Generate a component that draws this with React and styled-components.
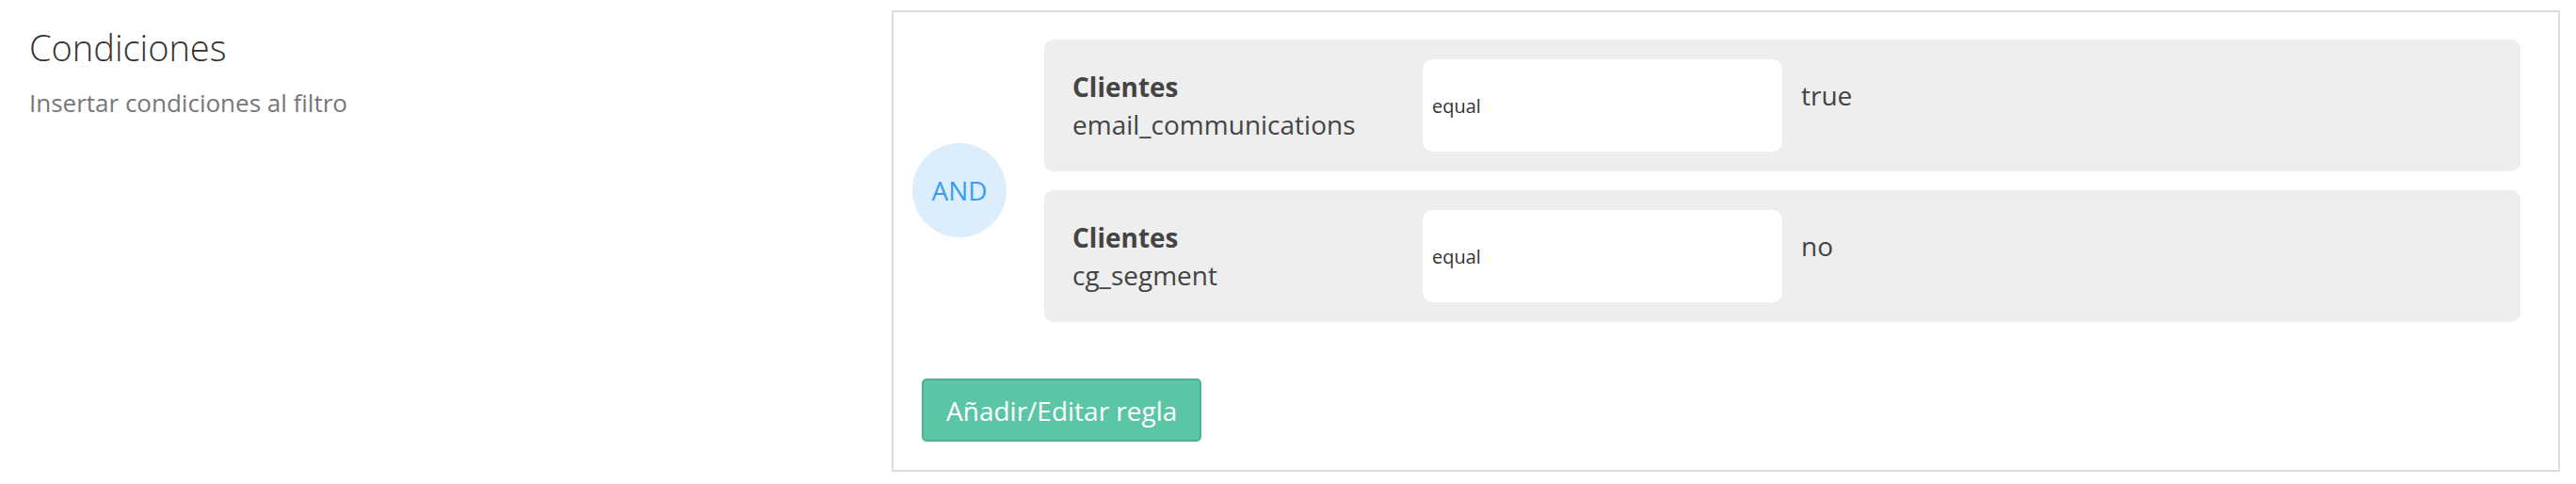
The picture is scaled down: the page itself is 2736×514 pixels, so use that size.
import React from 'react'
import styled, { createGlobalStyle } from 'styled-components'

const GlobalStyle = createGlobalStyle`
  body {
    margin: 0;
    background: #fff;
    font-family: 'Open Sans', 'Liberation Sans', sans-serif;
    color: #444;
  }
`

const rules = [
  { table: 'Clientes', field: 'email_communications', operator: 'equal', value: 'true' },
  { table: 'Clientes', field: 'cg_segment', operator: 'equal', value: 'no' },
]

const App = () => {
  return (
    <>
      <GlobalStyle />
      <Page>
        <Intro>
          <Title>Condiciones</Title>
          <Subtitle>Insertar condiciones al filtro</Subtitle>
        </Intro>
        <Panel>
          <Group>
            <Operator>AND</Operator>
            <RuleList>
              {rules.map((rule, index) => {
                return (
                  <Rule key={index}>
                    <Label>
                      <strong>{rule.table}</strong>
                      <span>{rule.field}</span>
                    </Label>
                    <Select>{rule.operator}</Select>
                    <Value>{rule.value}</Value>
                  </Rule>
                )
              })}
            </RuleList>
          </Group>
          <Button type='button'>Añadir/Editar regla</Button>
        </Panel>
      </Page>
    </>
  )
}

const Page = styled.div`
  display: flex;
  align-items: flex-start;
  padding: 11px 17px 13px 31px;
`

const Intro = styled.div`
  flex: 0 0 916px;
  padding-top: 19px;
`

const Title = styled.h3`
  margin: 0;
  font-size: 38px;
  font-weight: 300;
  line-height: 1.1;
  color: #333;
`

const Subtitle = styled.p`
  margin: 19px 0 0;
  font-size: 26px;
  line-height: 37px;
  color: #777;
`

const Panel = styled.section`
  flex: 1;
  border: 2px solid #ddd;
  padding: 29px 40px 30px 20px;
`

const Group = styled.div`
  display: flex;
  align-items: center;
`

const Operator = styled.div`
  flex: 0 0 100px;
  height: 100px;
  margin-right: 40px;
  border-radius: 50%;
  background: #dcedfc;
  color: #3b9df2;
  font-size: 28px;
  display: flex;
  align-items: center;
  justify-content: center;
`

const RuleList = styled.div`
  flex: 1;
`

const Rule = styled.div`
  display: flex;
  align-items: center;
  padding: 21px 30px;
  margin-bottom: 20px;
  background: #eee;
  border-radius: 10px;
`

const Label = styled.div`
  flex: 0 0 372px;
  display: flex;
  flex-direction: column;
  font-size: 28px;
  line-height: 40px;
  color: #444;
  strong {
    font-weight: 700;
  }
`

const Select = styled.div`
  flex: 0 0 382px;
  box-sizing: border-box;
  height: 98px;
  padding-left: 10px;
  display: flex;
  align-items: center;
  background: #fff;
  border-radius: 10px;
  font-size: 20px;
  color: #333;
`

const Value = styled.div`
  align-self: flex-start;
  margin: 18px 0 0 20px;
  font-size: 28px;
  line-height: 40px;
  color: #444;
`

const Button = styled.button`
  display: block;
  margin: 40px 0 0 10px;
  height: 67px;
  padding: 0 24px;
  border: 2px solid #4db394;
  border-radius: 5px;
  background: #5bc5a6;
  color: #fff;
  font-family: 'Open Sans', 'Liberation Sans', sans-serif;
  font-size: 28px;
  cursor: pointer;
`

export default App
